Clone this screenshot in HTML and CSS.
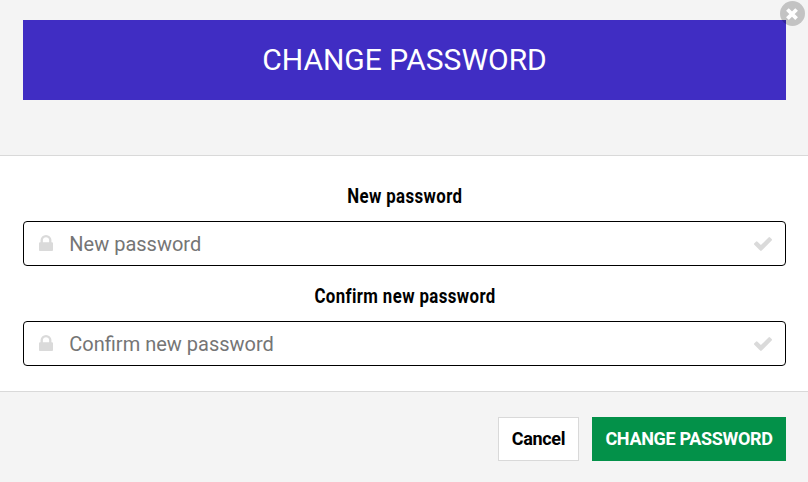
FILE: index.html
```html
<!DOCTYPE html>
<html lang="en">
<head>
<meta charset="utf-8">
<title>Change password</title>
<link rel="stylesheet" href="styles.css">
</head>
<body>
<form class="modal">
  <header class="modal-header">
    <h1 class="title">CHANGE PASSWORD</h1>
    <button class="close" type="button" aria-label="Close"><svg viewBox="0 0 26 26"><circle cx="13.5" cy="13.5" r="12.5"/><path d="M8.4 9.5l9.2 9.2M17.6 9.5l-9.2 9.2"/></svg></button>
  </header>
  <main class="modal-body">
    <label class="label" for="new"><span class="label-text">New password</span></label>
    <div class="field">
      <svg class="lock" viewBox="0 0 1152 1408" preserveAspectRatio="none"><path d="M320 640h512V448q0-106-75-181t-181-75-181 75-75 181zm832 96v576q0 40-28 68t-68 28H96q-40 0-68-28t-28-68V736q0-40 28-68t68-28h32V448q0-184 132-316T576 0t316 132 132 316v192h32q40 0 68 28t28 68z"/></svg>
      <input class="input" id="new" type="password" placeholder="New password">
      <svg class="check" viewBox="0 0 1550 1188"><path d="M1550 232q0 40-28 68l-724 724-136 136q-28 28-68 28t-68-28l-136-136L28 662Q0 634 0 594t28-68l136-136q28-28 68-28t68 28l294 295 656-657q28-28 68-28t68 28l136 136q28 28 28 68z"/></svg>
    </div>
    <label class="label" for="confirm"><span class="label-text">Confirm new password</span></label>
    <div class="field">
      <svg class="lock" viewBox="0 0 1152 1408" preserveAspectRatio="none"><path d="M320 640h512V448q0-106-75-181t-181-75-181 75-75 181zm832 96v576q0 40-28 68t-68 28H96q-40 0-68-28t-28-68V736q0-40 28-68t68-28h32V448q0-184 132-316T576 0t316 132 132 316v192h32q40 0 68 28t28 68z"/></svg>
      <input class="input" id="confirm" type="password" placeholder="Confirm new password">
      <svg class="check" viewBox="0 0 1550 1188"><path d="M1550 232q0 40-28 68l-724 724-136 136q-28 28-68 28t-68-28l-136-136L28 662Q0 634 0 594t28-68l136-136q28-28 68-28t68 28l294 295 656-657q28-28 68-28t68 28l136 136q28 28 28 68z"/></svg>
    </div>
  </main>
  <footer class="modal-footer">
    <button class="button cancel" type="button">Cancel</button>
    <button class="button submit" type="button">CHANGE PASSWORD</button>
  </footer>
</form>
</body>
</html>
```
FILE: styles.css
```css
* { box-sizing: border-box; }
body { margin: 0; font-family: Roboto, sans-serif; color: #000; background: #f4f4f4; overflow: hidden; }
.modal { position: relative; height: 482px; display: flex; flex-direction: column; }
.modal-header { height: 156px; padding: 20px 22px 0 23px; border-bottom: 1px solid #d9d9d9; }
.title { margin: 0; height: 80px; line-height: 79px; background: #402dc3; color: #fff; font-size: 30px; font-weight: 400; text-align: center; }
.close { position: absolute; top: 0; right: 3px; width: 26px; height: 26px; padding: 0; border: 0; background: none; }
.close svg { display: block; width: 26px; height: 26px; fill: rgba(0, 0, 0, .2); }
.close path { stroke: #fff; stroke-width: 3.8; }
.modal-body { height: 235px; padding: 25px 22px 0 23px; background: #fff; }
.label { display: block; height: 40px; padding-left: 1px; line-height: 31px; text-align: center; font-size: 19.5px; font-weight: 700; }
.label-text { display: inline-block; letter-spacing: .45px; transform: scaleX(.863); }
.field { height: 45px; margin-bottom: 15px; padding: 0 13px 0 15px; display: flex; align-items: center; border: 1px solid #000; border-radius: 4px; }
.lock { width: 14px; height: 16px; margin-bottom: 1px; fill: #dadada; }
.check { width: 18px; height: 14px; fill: #dadada; }
.input { flex: 1; min-width: 0; height: 40px; margin-left: 16.3px; padding: 0; border: 0; background: none; font: 400 20px Roboto, sans-serif; }
.input::placeholder { color: #757575; opacity: 1; }
.modal-footer { flex: 1; display: flex; justify-content: flex-end; gap: 13px; padding: 25px 22px 0; border-top: 1px solid #d9d9d9; }
.button { height: 44px; padding: 0 0 2px; font: 700 18px Roboto, sans-serif; letter-spacing: -.33px; white-space: nowrap; }
.cancel { width: 81px; border: 1px solid #d9d9d9; background: #fff; color: #000; }
.submit { width: 194px; border: 0; background: #039149; color: #fff; }
```
